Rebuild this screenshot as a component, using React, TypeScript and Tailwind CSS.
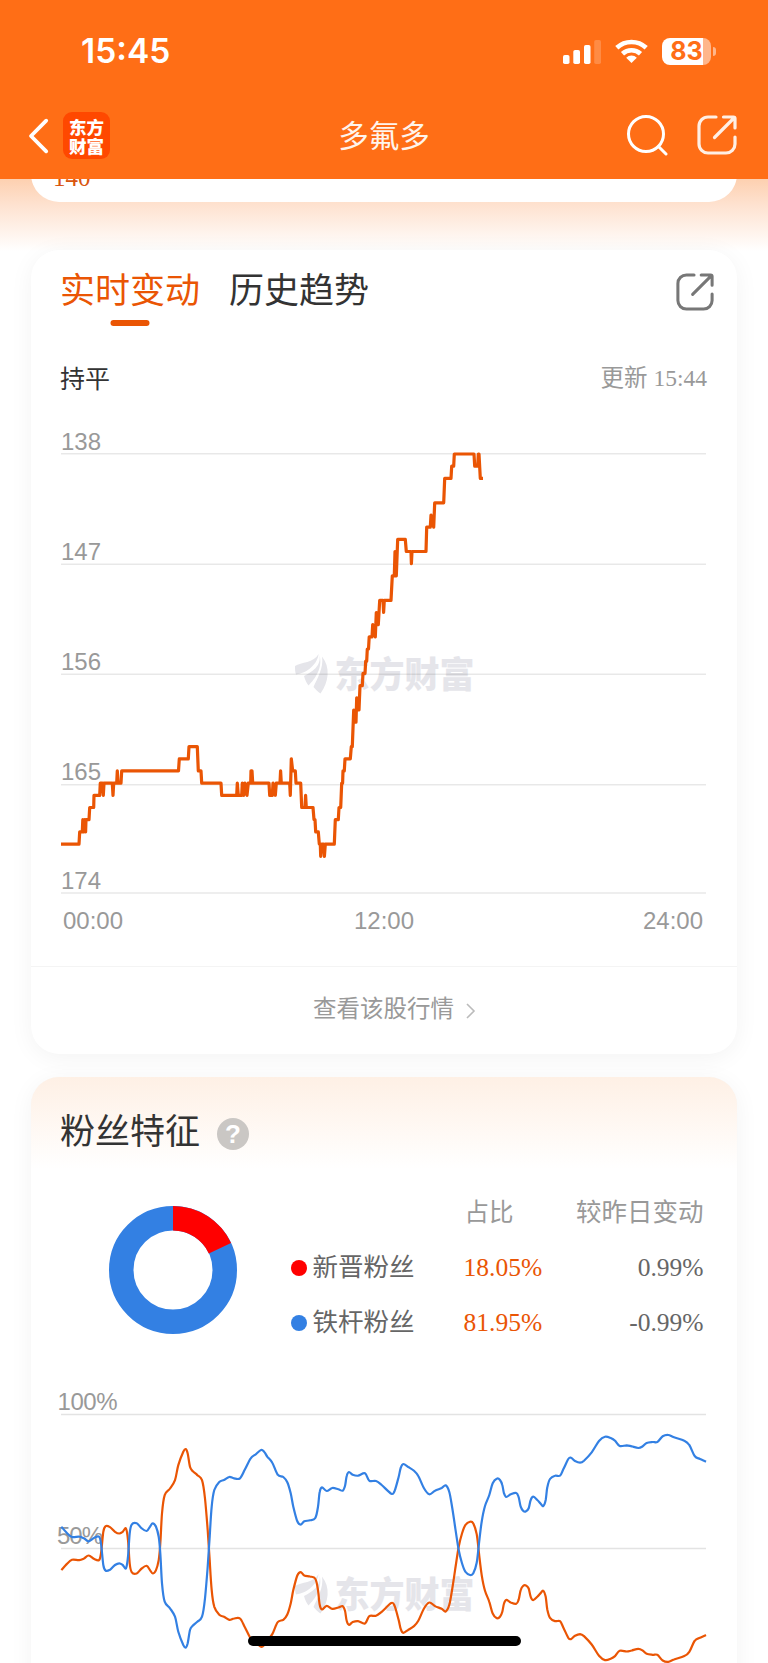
import React from 'react';

const SANS = 'font-["Liberation_Sans","Noto_Sans_CJK_SC",sans-serif]';
const SERIF = 'font-["Liberation_Serif","Noto_Sans_CJK_SC",serif]';

type Point = [number, number];

// [x, rank] steps over the day
const rankData: Point[] = [
    [61, 170], [79, 170], [79.7, 169], [82.3, 169], [82.8, 168], [84, 169], [84.6, 168], [85.6, 169], [86, 168],
    [89, 168], [89.7, 167], [93.7, 167], [94, 166], [99.7, 166], [100.3, 165], [102.3, 165], [103.3, 166], [104, 165],
    [112.3, 165], [113, 166], [113.7, 165], [116.7, 165], [117.3, 164], [118, 165], [121, 165], [121.7, 164],
    [178.5, 164], [179.3, 163], [188.3, 163], [189, 162], [197.3, 162], [198.3, 164], [201, 164], [201.7, 165],
    [221, 165], [221.7, 166], [236.7, 166], [237.3, 165], [238.3, 166], [241.7, 166], [242.3, 165], [243.7, 166],
    [245, 165], [247, 166], [248.3, 165], [250.7, 165], [251, 164], [252, 164], [252.7, 165], [269, 165],
    [269.7, 166], [272.3, 166], [273, 165], [275.3, 166], [276.3, 165], [280, 165], [280.6, 164], [281.3, 165],
    [289.7, 165], [290.3, 166], [291.3, 163], [292.7, 164], [295.3, 164], [296, 165], [300.7, 165], [301.7, 167],
    [305, 167], [305.6, 166], [306.3, 167], [313, 167], [314, 168], [315, 168], [315.7, 169], [318.3, 169],
    [319.3, 170], [320.3, 170], [320.7, 171], [321.7, 170], [323.7, 170], [324.4, 171], [325.3, 170], [334.3, 170],
    [335.3, 168], [338.3, 168], [339, 167], [340.7, 167], [341.7, 165], [342.6, 165], [343, 164], [344.3, 164],
    [345, 163], [350.3, 163], [351.3, 162], [352.3, 162], [353.7, 159], [355.3, 160], [356, 160], [356.7, 158],
    [359, 159], [360, 157], [362.3, 157], [363, 156], [365, 156], [365.7, 155], [366.7, 155], [367.3, 154],
    [368.5, 154], [369.2, 153], [372, 153], [372.7, 152], [375.3, 153], [376.3, 151], [378.3, 152], [379.7, 150],
    [383, 150], [383.6, 151], [384.3, 150], [391, 150], [392.3, 148], [394.3, 148], [395, 146], [396.3, 148],
    [397.7, 145], [405.3, 145], [406.3, 146], [411, 146], [411.4, 147], [412, 146], [426, 146], [426.7, 144],
    [430.3, 144], [431, 143], [433.7, 144], [434.7, 142], [443.7, 142], [444.7, 140], [451, 140], [451.7, 139],
    [453.7, 139], [454.3, 138], [474, 138], [474.7, 139], [477.7, 139], [478.3, 138], [479, 138], [480.3, 140],
    [483, 140],
];

const rankPoints = rankData.map(([x, v]) => `${x},${(454 + (v - 138) * 12.19).toFixed(1)}`).join(' ');

const rankGrid = [
    { label: '138', y: 453.7, text: 450 },
    { label: '147', y: 564.3, text: 560 },
    { label: '156', y: 674.3, text: 670 },
    { label: '165', y: 784.7, text: 779.5 },
    { label: '174', y: 893, text: 889 },
];

// share of loyal fans; the new fans line is its mirror around 50%
const MID = 1548.4;
const rawA: Point[] = [
    [64, 440], [80, 458], [96, 471], [118, 470], [132, 475], [146, 484], [163, 473], [177, 470], [183, 490],
    [190, 555], [197, 572], [210, 569], [225, 555], [238, 550], [248, 555], [258, 565], [264, 530], [269, 460],
    [275, 434], [290, 430], [305, 445], [320, 453], [330, 440], [338, 430], [348, 440], [356, 470], [361, 520],
    [366, 610], [374, 665], [390, 685], [405, 710], [415, 755], [430, 795], [437, 803], [443, 790], [450, 750],
    [458, 737], [472, 725], [486, 710], [495, 655], [503, 560], [509, 470], [515, 380], [523, 330], [538, 306],
    [552, 300], [568, 291], [582, 295], [600, 295], [615, 268], [632, 235], [647, 223], [663, 210], [673, 216],
    [682, 230], [697, 248],
];
const rawB: Point[] = [
    [23, 224], [40, 231], [52, 247], [62, 280], [70, 320], [82, 364], [92, 374], [103, 364], [120, 361],
    [136, 354], [144, 320], [149, 276], [156, 262], [170, 273], [187, 264], [205, 268], [218, 272], [225, 258],
    [230, 228], [237, 216], [248, 224], [264, 227], [285, 220], [298, 242], [318, 243], [335, 255], [364, 281],
    [374, 272], [386, 230], [392, 204], [400, 192], [415, 201], [432, 212], [445, 228], [462, 265], [478, 283],
    [495, 272], [515, 264], [527, 256], [538, 276], [547, 325], [556, 385], [566, 450], [576, 490], [586, 515],
    [600, 525], [610, 520], [620, 488], [627, 430], [635, 365], [645, 318], [658, 285], [668, 250], [680, 236],
    [690, 240], [697, 255], [702, 280], [709, 291], [722, 283], [739, 279], [746, 292], [752, 320], [760, 333],
    [768, 334], [776, 325], [782, 300], [790, 290], [802, 300], [812, 311], [820, 318], [827, 300], [832, 262],
    [840, 237], [855, 227], [870, 227], [880, 208], [895, 177], [903, 173], [915, 183], [930, 188], [942, 182],
    [965, 157], [987, 123], [1005, 110], [1022, 114], [1035, 122], [1049, 138], [1070, 136], [1085, 139],
    [1105, 144], [1118, 139], [1130, 129], [1148, 126], [1162, 126], [1178, 109], [1195, 105], [1212, 112],
    [1243, 122], [1258, 135], [1274, 168], [1290, 177], [1308, 185],
];
const loyal: Point[] = [
    ...rawA.map(([x, y]): Point => [40 + x / 3, 1380 + y / 3]),
    ...rawB.map(([x, y]): Point => [270 + x / 3, 1400 + y / 3]),
];
const fresh: Point[] = loyal.map(([x, y]) => [x, 2 * MID - y]);

function smooth(pts: Point[]) {
    let d = `M${pts[0][0].toFixed(1)} ${pts[0][1].toFixed(1)}`;
    for (let i = 0; i < pts.length - 1; i++) {
        const p0 = pts[i - 1] || pts[i];
        const p1 = pts[i];
        const p2 = pts[i + 1];
        const p3 = pts[i + 2] || p2;
        const c = [
            p1[0] + (p2[0] - p0[0]) / 6, p1[1] + (p2[1] - p0[1]) / 6,
            p2[0] - (p3[0] - p1[0]) / 6, p2[1] - (p3[1] - p1[1]) / 6,
            p2[0], p2[1],
        ].map((n) => n.toFixed(1));
        d += `C${c.join(' ')}`;
    }
    return d;
}

function ShareIcon({ className }: { className: string }) {
    return (
        <svg viewBox="0 0 40 40" className={className} fill="none" stroke="currentColor" strokeWidth="3.200" strokeLinecap="round" strokeLinejoin="round">
            <path d="M19 2H11a9 9 0 0 0-9 9v18a9 9 0 0 0 9 9h18a9 9 0 0 0 9-9v-7" />
            <path d="M26.500 2H36.500a1.500 1.500 0 0 1 1.500 1.500V13M37 3L17.500 22.500" />
        </svg>
    );
}

function Watermark({ y }: { y: number }) {
    return (
        <g fill="#e5e5ea">
            <g transform={`translate(295 ${y})`}>
                <path d="M0 12C6 8 19 9 23.500 0C23 9 13 19 1 20.500C0 18 0 15 0 12Z" />
                <path d="M24.500 1C26.500 12 17 18 9 22C10 26 11.500 29 13.500 31.500C20 25 28 14 24.500 1Z" />
                <path d="M27 2.500C29 14 22 25 18.500 33C21 36 23 38 25.500 39.500C34 28 35.500 13 27 2.500Z" />
            </g>
            <text x="334.500" y={y + 34} textLength="140" lengthAdjust="spacingAndGlyphs" className='font-["Noto_Sans_CJK_SC",sans-serif] text-[36px] font-black'>东方财富</text>
        </g>
    );
}

function Header() {
    return (
        <header className="relative z-10 flex h-[179px] shrink-0 flex-col bg-[#ff6e16] text-white">
            <div className="flex h-[102px] items-center pl-[81px] pr-[52px]">
                <span className='mt-px font-["Inter",sans-serif] text-[33.5px] font-semibold leading-none'>15:45</span>
                <div className="ml-auto flex items-center">
                    <svg viewBox="0 0 38.500 24" className="mt-px h-6 w-[38.5px]" fill="currentColor">
                        <rect x="0" y="15" width="6.500" height="9" rx="1.800" />
                        <rect x="10.300" y="10" width="6.700" height="14" rx="1.800" />
                        <rect x="21" y="5" width="6.500" height="19" rx="1.800" />
                        <rect x="31.200" y="0" width="6.800" height="24" rx="1.800" opacity=".2" />
                    </svg>
                    <svg viewBox="0 0 33 24" className="ml-[14px] h-6 w-[33px]" fill="none" stroke="currentColor" strokeWidth="4.600">
                        <path d="M1.800 8.800a21.500 21.500 0 0 1 29.400 0" />
                        <path d="M7.500 14.800a13.200 13.200 0 0 1 18 0" />
                        <path d="M16.500 24l-5.300-5.300a7.600 7.600 0 0 1 10.600 0z" fill="currentColor" stroke="none" />
                    </svg>
                    <div className="ml-[14px] flex h-[27px] w-[49px] items-center justify-center rounded-[8px] bg-[linear-gradient(to_right,#fff_41px,#ffb68b_41px)]">
                        <span className='font-["Inter",sans-serif] text-[25px] font-bold leading-[27px] text-[#ff6e16]'>83</span>
                    </div>
                    <div className="ml-[2px] h-[9px] w-[3px] rounded-r-full bg-[#ffb68b]" />
                </div>
            </div>
            <div className="relative flex h-[68px] items-center pl-[28px] pr-[31px]">
                <svg viewBox="0 0 22 36" className="h-9 w-[22px]" fill="none" stroke="currentColor" strokeWidth="3.800" strokeLinecap="round" strokeLinejoin="round">
                    <path d="M18.200 2.700L3 18l15.200 15.300" />
                </svg>
                <div className='ml-[13px] mb-px flex h-[47px] w-[47px] flex-col items-center justify-center rounded-[9px] bg-[#ff4800] font-["Noto_Sans_CJK_SC",sans-serif] text-[17.5px] font-black leading-[19px]'>
                    <span>东方</span>
                    <span>财富</span>
                </div>
                <h1 className={`absolute left-1/2 mt-px -translate-x-1/2 text-[30.5px] leading-none text-[#fff4ec] ${SANS}`}>多氟多</h1>
                <svg viewBox="0 0 42 42" className="ml-auto mb-[2px] h-[42px] w-[42px]" fill="none" stroke="currentColor" strokeWidth="3" strokeLinecap="round">
                    <circle cx="20" cy="20" r="17.500" />
                    <path d="M32.500 32.500L40 40" />
                </svg>
                <ShareIcon className="mb-[2px] ml-[29.5px] h-10 w-10 text-[#ffefe4]" />
            </div>
        </header>
    );
}

function RankCard() {
    return (
        <section className="mt-[48.5px] flex h-[804px] shrink-0 flex-col rounded-[28px] bg-white shadow-[0_4px_24px_rgba(0,0,0,0.05)]">
            <div className="flex h-20 items-center pl-[29px] pr-[23px] text-[35px] leading-none">
                <div className="relative flex h-full items-center text-[#ea5504]">
                    实时变动
                    <span className="absolute bottom-[4px] left-1/2 h-[6px] w-[39px] -translate-x-1/2 rounded-full bg-[#ea5504]" />
                </div>
                <div className="ml-[29px] text-[#333]">历史趋势</div>
                <ShareIcon className="mt-[4px] ml-auto h-[38px] w-[38px] text-[#777]" />
            </div>
            <div className={`flex h-24 items-center justify-between pt-[2px] pl-[29px] pr-[30px] leading-none ${SERIF}`}>
                <span className="text-[25px] text-[#333]">持平</span>
                <span className="text-[23.5px] text-[#999]">更新 15:44</span>
            </div>
            <svg viewBox="31 426 706 540" className="h-[540px] w-[706px] shrink-0">
                <Watermark y={654} />
                {rankGrid.map((g) => (
                    <g key={g.label}>
                        <path d={`M61 ${g.y}H706`} stroke="#000" strokeOpacity=".09" strokeWidth="1.600" />
                        <text x="61" y={g.text} fill="#999" className="text-[24px]">{g.label}</text>
                    </g>
                ))}
                <polyline points={rankPoints} fill="none" stroke="#ea5504" strokeWidth="3.200" strokeLinejoin="round" />
                <g fill="#999" className="text-[24px]">
                    <text x="63" y="929">00:00</text>
                    <text x="354" y="929">12:00</text>
                    <text x="643" y="929">24:00</text>
                </g>
            </svg>
            <div className="flex flex-1 items-center justify-center gap-3 border-t-[1.5px] border-[#f4f4f4] pb-[2px] pl-[21px] text-[23.5px] leading-none text-[#999]">
                查看该股行情
                <svg viewBox="0 0 10 16" className="mt-[3px] h-4 w-[10px]" fill="none" stroke="#bbb" strokeWidth="1.600">
                    <path d="M1 1l7 7-7 7" />
                </svg>
            </div>
        </section>
    );
}

const fans = [
    { name: '新晋粉丝', dot: 'bg-[#ff0000]', ratio: '18.05%', change: '0.99%' },
    { name: '铁杆粉丝', dot: 'bg-[#3380e3]', ratio: '81.95%', change: '-0.99%' },
];

function FansCard() {
    const circ = 2 * Math.PI * 51.75;
    return (
        <section className="mt-[23px] flex h-[640px] shrink-0 flex-col rounded-[28px] bg-white bg-[linear-gradient(to_bottom,#fef0e5,#fff_92px)] shadow-[0_4px_24px_rgba(0,0,0,0.05)]">
            <div className="flex h-[107px] shrink-0 items-center gap-[17px] pl-[29px] pt-[2px]">
                <h2 className="text-[35px] leading-none text-[#333]">粉丝特征</h2>
                <span className="mt-[5px] flex h-8 w-8 items-center justify-center rounded-full bg-[#cac7c4] text-[26px] font-bold leading-none text-white">?</span>
            </div>
            <div className="flex h-[167px] shrink-0 items-center pl-[78px]">
                <svg viewBox="0 0 128 128" className="mt-[4px] h-32 w-32" fill="none" strokeWidth="24.500">
                    <circle cx="64" cy="64" r="51.750" stroke="#3380e3" />
                    <circle cx="64" cy="64" r="51.750" stroke="#ff0000" strokeDasharray={`${circ * 0.1805} ${circ}`} transform="rotate(-90 64 64)" />
                </svg>
                <div className={`ml-[53.5px] grid grid-cols-[173px_101px_139px] auto-rows-[55.5px] items-center text-[25.5px] leading-none text-[#666] ${SERIF}`}>
                    <span />
                    <span className="pt-[2px] pl-px text-[24.5px] text-[#999]">占比</span>
                    <span className="pt-[2px] text-right text-[25.5px] text-[#999]">较昨日变动</span>
                    {fans.map((f) => (
                        <React.Fragment key={f.name}>
                            <span className="flex items-center gap-[6px]">
                                <i className={`h-4 w-4 rounded-full ${f.dot}`} />
                                {f.name}
                            </span>
                            <span className="text-[#ea5504]">{f.ratio}</span>
                            <span className="text-right">{f.change}</span>
                        </React.Fragment>
                    ))}
                </div>
            </div>
            <svg viewBox="31 1351 706 340" className="h-[340px] w-[706px] shrink-0">
                <Watermark y={1574} />
                <path d="M61 1414.500H706M61 1548.500H706" stroke="#000" strokeOpacity=".11" strokeWidth="1.400" />
                <g fill="#999" className="text-[24px]">
                    <text x="57.500" y="1409.500" textLength="60">100%</text>
                    <text x="57" y="1544" textLength="46">50%</text>
                </g>
                <path d={smooth(fresh)} fill="none" stroke="#ea5504" strokeWidth="2.200" />
                <path d={smooth(loyal)} fill="none" stroke="#3380e3" strokeWidth="2.200" />
            </svg>
        </section>
    );
}

export default function App() {
    return (
        <div className={`relative flex h-[1663px] w-[768px] flex-col overflow-hidden bg-white ${SANS}`}>
            <Header />
            <main className="flex min-h-0 flex-1 flex-col overflow-hidden bg-[linear-gradient(to_bottom,#fdd0b0,#fee2d0_26px,#fff_72px)] px-[31px]">
                <div className={`-mt-[58px] flex h-[80.5px] shrink-0 items-end rounded-[28px] bg-white pb-[12px] pl-[22px] text-[25px] leading-none text-[#d9560f] ${SERIF}`}>
                    140
                </div>
                <RankCard />
                <FansCard />
            </main>
            {/* home indicator */}
            <div className="absolute bottom-[17px] left-[248px] z-20 h-[10px] w-[273px] rounded-full bg-black" />
        </div>
    );
}
